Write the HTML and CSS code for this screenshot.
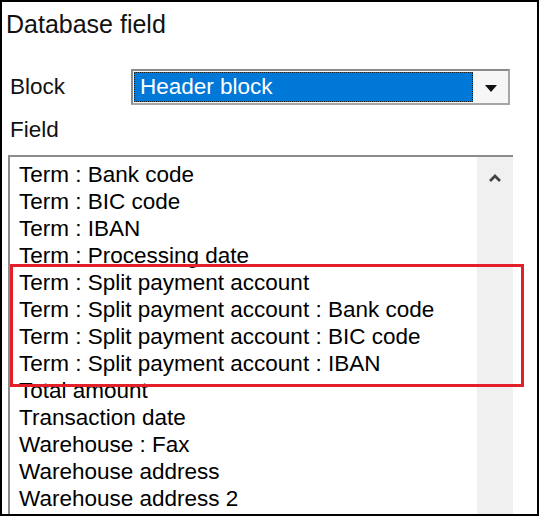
FILE: index.html
```html
<!DOCTYPE html>
<html lang="en">
<head>
  <meta charset="UTF-8">
  <meta name="viewport" content="width=device-width, initial-scale=1.0">
  <title>Database field</title>
  <link rel="stylesheet" href="styles.css">
</head>
<body>
  <div class="frame">
    <h1 class="title">Database field</h1>

    <!-- Block selector -->
    <div class="block-row">
      <span class="label">Block</span>
      <div class="combo">
        <div class="combo-value">Header block</div>
        <div class="combo-btn">
          <svg width="12" height="7" viewBox="0 0 12 7"><path d="M0 0 H12 L6 7 Z" fill="#111"/></svg>
        </div>
      </div>
    </div>

    <div class="field-label">Field</div>

    <!-- Field list -->
    <div class="list">
      <ul class="items">
        <li>Term : Bank code</li>
        <li>Term : BIC code</li>
        <li>Term : IBAN</li>
        <li>Term : Processing date</li>
        <li>Term : Split payment account</li>
        <li>Term : Split payment account : Bank code</li>
        <li>Term : Split payment account : BIC code</li>
        <li>Term : Split payment account : IBAN</li>
        <li>Total amount</li>
        <li>Transaction date</li>
        <li>Warehouse : Fax</li>
        <li>Warehouse address</li>
        <li>Warehouse address 2</li>
      </ul>
      <div class="scrollbar">
        <svg width="12" height="8" viewBox="0 0 12 8"><path d="M1 7 L6 2 L11 7" fill="none" stroke="#444" stroke-width="2.8"/></svg>
      </div>
    </div>

    <!-- Highlight -->
    <div class="highlight"></div>
  </div>
</body>
</html>
```

FILE: styles.css
```css
body {
  margin: 0;
  background: #fff;
}
.frame {
  position: relative;
  width: 539px;
  height: 516px;
  box-sizing: border-box;
  border: 2px solid #000;
  padding-top: 8px;
  overflow: hidden;
  background: #fff;
  font-family: "Liberation Sans", Arial, sans-serif;
  color: #111;
}
.title {
  margin: 0;
  padding-left: 4px;
  font-size: 25px;
  font-weight: normal;
  line-height: 28px;
}
/* Block row */
.block-row {
  display: flex;
  align-items: center;
  margin-top: 31px;
  padding-left: 8px;
  font-size: 22.5px;
  line-height: 26px;
}
.label {
  width: 121px;
}
.combo {
  display: flex;
  width: 379px;
  height: 36px;
  box-sizing: border-box;
  border: 2px solid #a6a6a6;
  border-top-color: #8a8a8a;
  border-left-color: #8a8a8a;
  background: #f6f6f6;
}
.combo-value {
  flex: 1;
  margin: 1px 0 1px 1px;
  padding-left: 5px;
  border: 1px dotted #222;
  background: #0078d7;
  color: #fff;
  line-height: 28px;
}
.combo-btn {
  width: 35px;
  display: flex;
  align-items: center;
  justify-content: center;
  padding-top: 2px;
  box-sizing: border-box;
}
.field-label {
  margin-top: 12px;
  padding-left: 8px;
  font-size: 22.5px;
  line-height: 26px;
}
/* List box */
.list {
  display: flex;
  margin: 12px 0 0 6px;
  width: 503px;
  height: 380px;
  border-top: 2px solid #8c8c8c;
  border-left: 2px solid #8c8c8c;
}
.items {
  flex: 1;
  margin: 0;
  padding: 4px 0 0 9px;
  list-style: none;
  font-size: 22.5px;
  line-height: 27px;
  white-space: nowrap;
  color: #000;
}
.scrollbar {
  width: 36px;
  background: #f0f0f0;
  display: flex;
  justify-content: center;
  padding-top: 17px;
  box-sizing: border-box;
}
.scrollbar svg {
  display: block;
}
/* Red highlight box */
.highlight {
  position: absolute;
  left: 8px;
  top: 262px;
  width: 514px;
  height: 123px;
  box-sizing: border-box;
  border: 3px solid #e3202a;
}
```
